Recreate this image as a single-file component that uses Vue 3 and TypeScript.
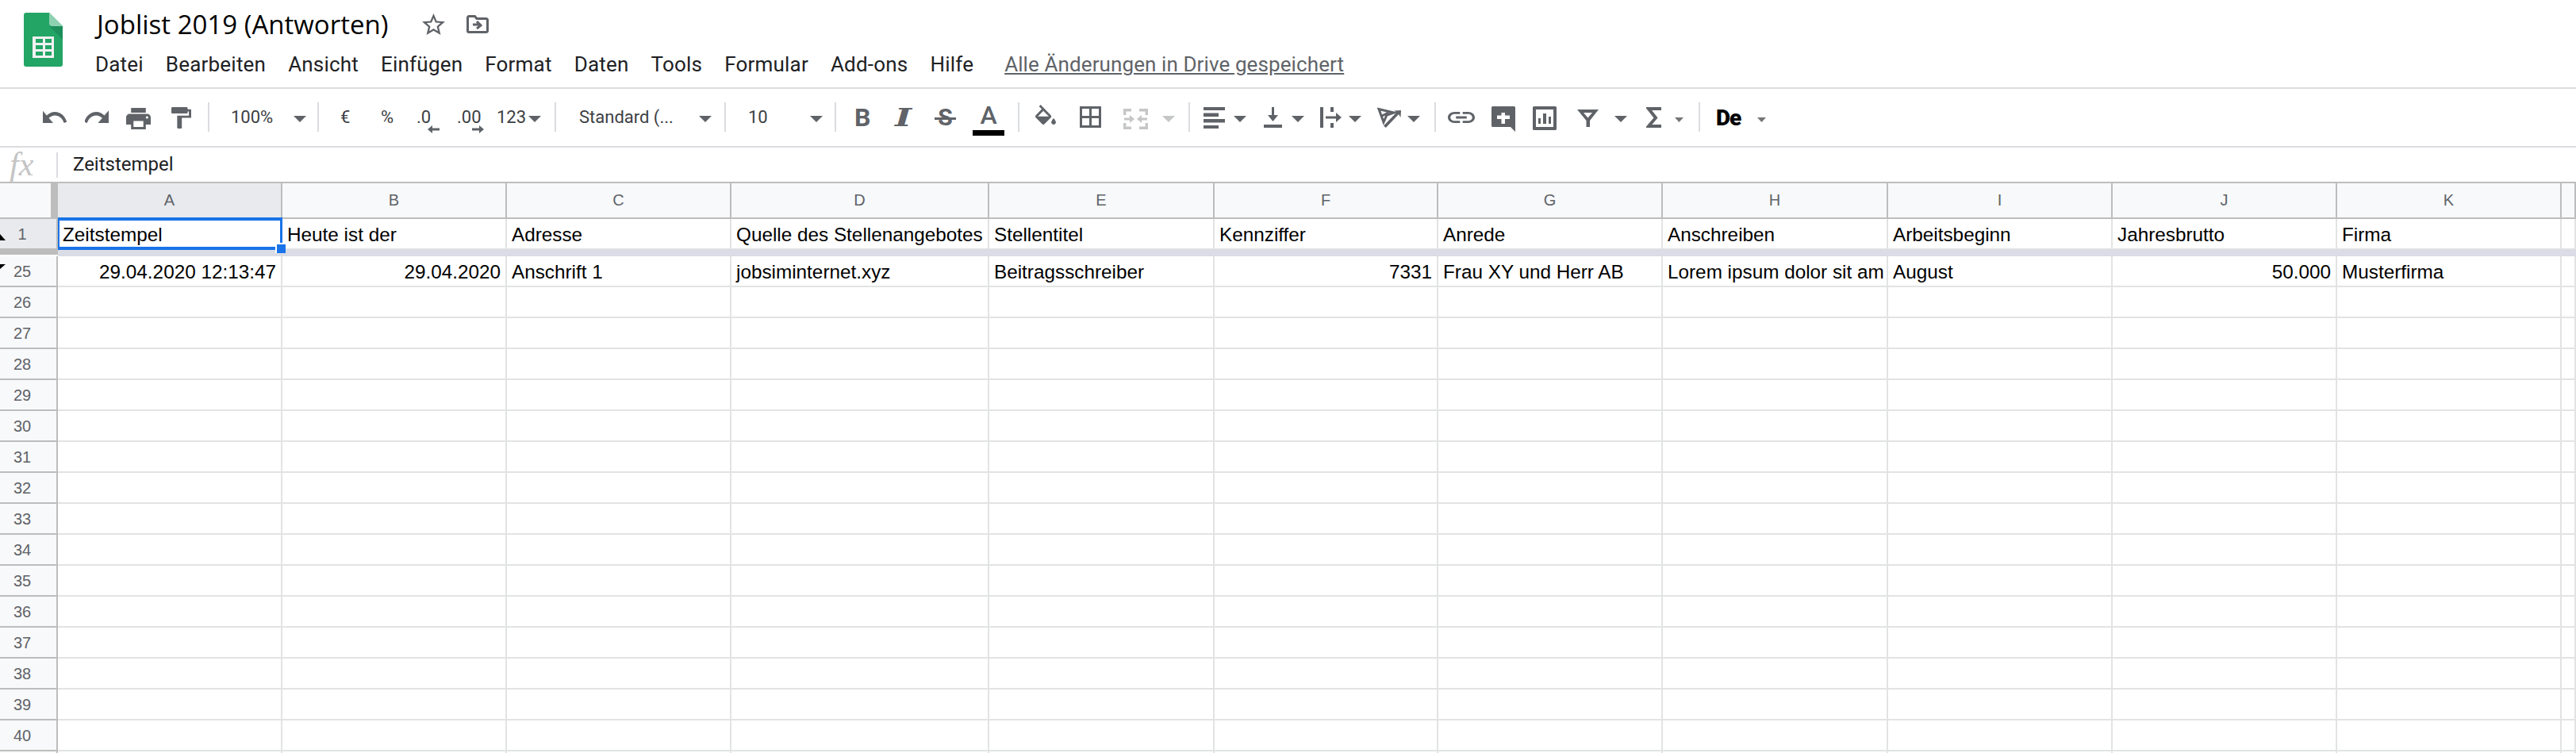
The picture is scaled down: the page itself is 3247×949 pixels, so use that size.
<script setup lang="ts">
interface Cell { t: string; r?: boolean }
const menus = ['Datei','Bearbeiten','Ansicht','Einfügen','Format','Daten','Tools','Formular','Add-ons','Hilfe']
const cols = ['A','B','C','D','E','F','G','H','I','J','K','']
const row1: Cell[] = ['Zeitstempel','Heute ist der','Adresse','Quelle des Stellenangebotes','Stellentitel','Kennziffer','Anrede','Anschreiben','Arbeitsbeginn','Jahresbrutto','Firma',''].map(t => ({ t }))
const row25: Cell[] = [
  { t: '29.04.2020 12:13:47', r: true }, { t: '29.04.2020', r: true }, { t: 'Anschrift 1' }, { t: 'jobsiminternet.xyz' },
  { t: 'Beitragsschreiber' }, { t: '7331', r: true }, { t: 'Frau XY und Herr AB' }, { t: 'Lorem ipsum dolor sit am' },
  { t: 'August' }, { t: '50.000', r: true }, { t: 'Musterfirma' }, { t: '' }
]
const emptyRows = Array.from({ length: 15 }, (_, i) => 26 + i)
</script>

<template>
  <div class="page">
    <header class="top">
      <svg class="logo" width="49" height="68" viewBox="0 0 49 68">
        <path d="M3 0H32L49 17V65a3 3 0 0 1-3 3H3a3 3 0 0 1-3-3V3a3 3 0 0 1 3-3z" fill="#23a566"/>
        <path d="M32 17L49 34V17z" fill="#1c8f5a"/>
        <path d="M32 0L49 17H36a4 4 0 0 1-4-4z" fill="#8ed1b1"/>
        <path d="M11 30H38V57H11z" fill="#f1f1f1"/>
        <path d="M15 33H24V38H15zM27 33H35V38H27zM15 41H24V46H15zM27 41H35V46H27zM15 49H24V54H15zM27 49H35V54H27z" fill="#23a566"/>
      </svg>
      <div class="titles">
        <div class="title-row">
          <span class="doc-title">Joblist 2019 (Antworten)</span>
          <svg class="star" width="29" height="27" viewBox="2 2 20 19" preserveAspectRatio="none"><path fill="#5f6368" d="M22 9.24l-7.19-.62L12 2 9.19 8.63 2 9.24l5.46 4.73L5.82 21 12 17.27 18.18 21l-1.63-7.03L22 9.24zM12 15.4l-3.76 2.27 1-4.28-3.32-2.88 4.38-.38L12 6.1l1.71 4.04 4.38.38-3.32 2.88 1 4.28L12 15.4z"/></svg>
          <svg class="move" width="28" height="23" viewBox="0 0 28 23"><path d="M1.5 4V20a1.5 1.5 0 0 0 1.5 1.5H25a1.5 1.5 0 0 0 1.5-1.5V6A1.5 1.5 0 0 0 25 4.5H13L10.5 1.5H3A1.5 1.5 0 0 0 1.5 3z" fill="none" stroke="#5f6368" stroke-width="3"/><path d="M8 12H16M13 8L18 13L13 17" fill="none" stroke="#5f6368" stroke-width="3"/></svg>
        </div>
        <nav class="menu">
          <span v-for="m in menus" :key="m">{{ m }}</span>
          <span class="saved">Alle Änderungen in Drive gespeichert</span>
        </nav>
      </div>
    </header>

    <div class="toolbar">
      <svg class="i-undo" width="30" height="40"><path transform="translate(-3.5,-1) scale(1.5,1.75)" d="M12.5 8c-2.65 0-5.05.99-6.9 2.6L2 7v9h9l-3.62-3.62c1.39-1.16 3.16-1.88 5.12-1.88 3.54 0 6.55 2.31 7.6 5.5l2.37-.78C21.08 11.03 17.15 8 12.5 8z"/></svg>
      <svg class="i-redo" width="30" height="40"><path transform="translate(-3,-1) scale(1.5,1.75)" d="M18.4 10.6C16.55 8.99 14.15 8 11.5 8c-4.65 0-8.58 3.03-9.96 7.22L3.9 16c1.05-3.19 4.05-5.5 7.6-5.5 1.95 0 3.73.72 5.12 1.88L13 16h9V7l-3.6 3.6z"/></svg>
      <svg class="i-print" width="31" height="40"><path transform="translate(-3.1,3.5) scale(1.55,1.5)" d="M19 8H5c-1.66 0-3 1.34-3 3v6h4v4h12v-4h4v-6c0-1.66-1.34-3-3-3zm-3 11H8v-5h8v5zm3-7c-.55 0-1-.45-1-1s.45-1 1-1 1 .45 1 1-.45 1-1 1zm-1-9H6v4h12V3z"/></svg>
      <svg class="i-paint" width="25" height="40"><path transform="translate(-5.9,4.3) scale(1.47,1.35)" d="M18 4V3c0-.55-.45-1-1-1H5c-.55 0-1 .45-1 1v4c0 .55.45 1 1 1h12c.55 0 1-.45 1-1V6h1v4H9v11c0 .55.45 1 1 1h2c.55 0 1-.45 1-1v-9h8V4h-3z"/></svg>
      <i class="sep s1"></i>
      <span class="tx zoom">100%</span>
      <i class="caret c-zoom"></i>
      <i class="sep s2"></i>
      <span class="tx small euro">€</span>
      <span class="tx small pct">%</span>
      <span class="dec d0"><span class="tx">.0</span>
        <svg width="15" height="10"><path d="M15 3.5H6V0L0 5l6 5V6.5h9z"/></svg>
      </span>
      <span class="dec d00"><span class="tx">.00</span>
        <svg width="15" height="10"><path d="M0 3.5H9V0l6 5-6 5V6.5H0z"/></svg>
      </span>
      <span class="tx n123">123</span>
      <i class="caret c-123"></i>
      <i class="sep s3"></i>
      <span class="tx font">Standard (...</span>
      <i class="caret c-font"></i>
      <i class="sep s4"></i>
      <span class="tx size">10</span>
      <i class="caret c-size"></i>
      <i class="sep s5"></i>
      <span class="glyph g-b">B</span>
      <span class="glyph g-i">I</span>
      <span class="glyph g-s">S</span>
      <span class="color-a"><span class="glyph g-a">A</span><i></i></span>
      <i class="sep s6"></i>
      <svg class="i-fill" width="26" height="40"><path transform="translate(-4.3,4) scale(1.44,1.47)" d="M16.56 8.94L7.62 0 6.21 1.41l2.38 2.38-5.15 5.15c-.59.59-.59 1.54 0 2.12l5.5 5.5c.29.29.68.44 1.06.44s.77-.15 1.06-.44l5.5-5.5c.59-.58.59-1.53 0-2.12zM5.21 10L10 5.21 14.79 10H5.21zM19 11.5s-2 2.17-2 3.5c0 1.1.9 2 2 2s2-.9 2-2c0-1.33-2-3.5-2-3.5z"/></svg>
      <svg class="i-border" width="27" height="40"><path transform="translate(-4.5,1.5) scale(1.5)" d="M3 3v18h18V3H3zm8 16H5v-6h6v6zm0-8H5V5h6v6zm8 8h-6v-6h6v6zm0-8h-6V5h6v6z"/></svg>
      <svg class="i-merge" width="31" height="40"><path fill="none" stroke="#c4c7c5" stroke-width="3.4" d="M1.7 17V10.7H10M20 10.7H29.3V17M1.7 27V33.300H10M20 33.300H29.300V27"/><path fill="#c4c7c5" d="M1 20.500H8V17L14 22L8 27V23.500H1zM30 20.500H23V17L17 22L23 27V23.500H30z"/></svg>
      <i class="caret light c-merge"></i>
      <i class="sep s7"></i>
      <svg class="i-align" width="27" height="40"><path d="M0 7H27V11H0zM0 14.500H19V19H0zM0 22H27V26.500H0zM0 30H19V34H0z"/></svg>
      <i class="caret c-align"></i>
      <svg class="i-valign" width="23" height="40"><path d="M10 7H13V17H18L11.500 25L5 17H10zM0 29H23V33H0z"/></svg>
      <i class="caret c-valign"></i>
      <svg class="i-wrap" width="27" height="40"><path d="M0 7H4V33H0zM13 7H17V13H13zM13 27H17V33H13zM7 18.500H20V14L27 20L20 26V21.500H7z"/></svg>
      <i class="caret c-wrap"></i>
      <svg class="i-rotate" width="30" height="40"><path fill="none" stroke="#5f6368" stroke-width="3" d="M2 9.500L8 26L12 17L21 14zM6 18L14 14"/><path d="M8 30.500L24.500 13.500L21 11.500L30 11L29.500 20L27 16L10.800 33z"/></svg>
      <i class="caret c-rotate"></i>
      <i class="sep s8"></i>
      <svg class="i-link" width="34" height="40"><path transform="translate(-3.400,3.200) scale(1.7,1.4)" d="M3.900 12c0-1.710 1.390-3.100 3.100-3.100h4V7H7c-2.760 0-5 2.240-5 5s2.240 5 5 5h4v-1.900H7c-1.710 0-3.100-1.390-3.100-3.100zM8 13h8v-2H8v2zm9-6h-4v1.900h4c1.710 0 3.100 1.390 3.100 3.100s-1.390 3.100-3.100 3.100h-4V17h4c2.760 0 5-2.240 5-5s-2.240-5-5-5z"/></svg>
      <svg class="i-comment" width="30" height="40"><path fill-rule="evenodd" d="M1.500 6H28.500A1.500 1.500 0 0 1 30 7.500V38L24 32H1.500A1.500 1.500 0 0 1 0 30.500V7.500A1.500 1.500 0 0 1 1.500 6zM12.500 14V17.500H7V22H12.500V28H17V22H23V17.500H17V14z"/></svg>
      <svg class="i-chart" width="30" height="40"><path fill-rule="evenodd" d="M1.500 6H28.500A1.500 1.500 0 0 1 30 7.500V34.500A1.500 1.500 0 0 1 28.500 36H1.500A1.500 1.500 0 0 1 0 34.500V7.500A1.500 1.500 0 0 1 1.500 6zM4 10V32H26V10zM7 21H10V28H7zM13 15H17V28H13zM20 19H23V28H20z"/></svg>
      <svg class="i-filter" width="27" height="40"><path fill-rule="evenodd" d="M0 10H27L16 24V32H11.500V24zM8 14L13.500 20.500L19 14z"/></svg>
      <i class="caret c-filter"></i>
      <svg class="i-sigma" width="19" height="40"><path fill="none" stroke="#5f6368" stroke-width="4" d="M19 9H3L12 20.500L3 31H19"/></svg>
      <i class="caret mini c-sigma"></i>
      <i class="sep s9"></i>
      <span class="de">De</span>
      <i class="caret mini c-de"></i>
    </div>

    <div class="formula">
      <span class="fx">fx</span>
      <i class="fsep"></i>
      <span class="ftext">Zeitstempel</span>
    </div>

    <section class="sheet">
      <div class="grid-row head">
        <div class="corner"></div>
        <div v-for="(c, i) in cols" :key="i" class="col-h" :class="{ active: c === 'A' }">{{ c }}</div>
      </div>

      <div class="grid-row row-first">
        <div class="row-h active"><b class="tri up"></b>1</div>
        <div v-for="(c, i) in row1" :key="i" class="cell">{{ c.t }}</div>
      </div>

      <div class="freeze"><div class="freeze-left"></div><div class="freeze-right"></div></div>

      <div class="grid-row body">
        <div class="row-h"><b class="tri down"></b>25</div>
        <div v-for="(c, i) in row25" :key="i" class="cell" :class="{ right: c.r }">{{ c.t }}</div>
      </div>

      <div v-for="n in emptyRows" :key="n" class="grid-row body">
        <div class="row-h">{{ n }}</div>
        <div v-for="(c, i) in cols" :key="i" class="cell"></div>
      </div>

      <div class="grid-row body">
        <div class="row-h"></div>
        <div v-for="(c, i) in cols" :key="i" class="cell"></div>
      </div>

      <div class="selection"><i class="handle"></i></div>
    </section>
  </div>
</template>

<style>
html, body { margin: 0; background: #fff; overflow: hidden; }
</style>

<style scoped>
.page { width: 3247px; height: 949px; overflow: hidden; background: #fff; font-family: Roboto, sans-serif; color: #202124; }

.top { height: 110px; border-bottom: 2px solid #dadce0; display: flex; }
.logo { margin: 16px 0 0 30px; flex: none; }
.titles { margin-left: 42px; }
.title-row { height: 58px; display: flex; align-items: flex-start; }
.doc-title { font-family: "Open Sans", sans-serif; font-size: 33px; line-height: 30px; margin: 16px 0 0 1px; color: #000; width: 410px; white-space: nowrap; }
.star { margin-top: 17px; }
.move { margin: 19px 0 0 27px; }
.menu { display: flex; gap: 28px; font-size: 26px; letter-spacing: 0.2px; line-height: 30px; margin-top: 8px; white-space: nowrap; margin-left: -1px; }
.saved { color: #5f6368; text-decoration: underline; margin-left: 11px; letter-spacing: 0.1px; }

.toolbar { height: 56px; padding-top: 16px; border-bottom: 2px solid #dadce0; display: flex; align-items: flex-start; padding-left: 54px; }
.toolbar svg { flex: none; fill: #5f6368; }
.sep { flex: none; width: 2px; height: 37px; margin-top: 1px; background: #dadce0; }
.caret { flex: none; width: 16px; height: 8px; margin-top: 18px; background: #5f6368; clip-path: polygon(0 0, 100% 0, 50% 100%); }
.caret.light { background: #c4c7c5; }
.caret.mini { width: 11px; height: 6px; margin-top: 20px; background: #757575; }
.tx { flex: none; font-size: 22px; line-height: 40px; color: #3c4043; white-space: nowrap; }

.i-redo { margin-left: 23px; }
.i-print { margin-left: 22px; }
.i-paint { margin-left: 26px; }
.s1 { margin-left: 21px; }
.zoom { width: 54px; margin-left: 27px; }
.c-zoom { margin-left: 25px; }
.s2 { margin-left: 14px; }
.small { font-size: 22px; }
.euro { width: 12px; margin-left: 27px; }
.pct { width: 17px; margin-left: 39px; }
.dec { flex: none; width: 30px; height: 40px; position: relative; }
.dec svg { position: absolute; top: 30px; }
.d0 { margin-left: 28px; width: 18px; }
.d0 svg { left: 14px; }
.d00 { margin-left: 33px; }
.d00 svg { left: 19px; }
.n123 { width: 36px; margin-left: 20px; }
.c-123 { margin-left: 4px; }
.s3 { margin-left: 17px; }
.font { width: 121px; margin-left: 29px; }
.c-font { margin-left: 30px; }
.s4 { margin-left: 16px; }
.size { width: 24px; margin-left: 28px; }
.c-size { margin-left: 54px; }
.s5 { margin-left: 15px; }

.glyph { flex: none; line-height: 40px; color: #5f6368; }
.g-b { width: 19px; margin-left: 23px; font-size: 32px; font-weight: 700; }
.g-i { width: 23px; margin-left: 31px; font-family: "DejaVu Serif", serif; font-style: italic; font-weight: 700; font-size: 31px; text-align: center; transform: scaleX(1.45); }
.g-s { width: 27px; margin-left: 28px; font-size: 30px; font-weight: 700; text-align: center; position: relative; }
.g-s::after { content: ""; position: absolute; left: 0; right: 0; top: 20px; height: 3px; background: #5f6368; }
.color-a { flex: none; width: 40px; height: 43px; margin-left: 21px; display: flex; flex-direction: column; align-items: center; }
.g-a { font-size: 32px; font-weight: 500; line-height: 32px; height: 35px; margin-top: 1px; }
.color-a i { display: block; width: 40px; height: 8px; background: #000; }
.s6 { margin-left: 17px; }
.i-fill { margin-left: 20px; }
.i-border { margin-left: 30px; }
.i-merge { margin-left: 28px; }
.c-merge { margin-left: 18px; }
.s7 { margin-left: 17px; }
.i-align { margin-left: 17px; }
.c-align { margin-left: 11px; }
.i-valign { margin-left: 22px; }
.c-valign { margin-left: 12px; }
.i-wrap { margin-left: 20px; }
.c-wrap { margin-left: 9px; }
.i-rotate { margin-left: 20px; }
.c-rotate { margin-left: 8px; }
.s8 { margin-left: 18px; }
.i-link { margin-left: 15px; }
.i-comment { margin-left: 21px; }
.i-chart { margin-left: 22px; }
.i-filter { margin-left: 26px; }
.c-filter { margin-left: 20px; }
.i-sigma { margin-left: 24px; }
.c-sigma { margin-left: 17px; }
.s9 { margin-left: 19px; }
.de { flex: none; width: 32px; margin-left: 20px; font-size: 28px; font-weight: 900; line-height: 42px; color: #000; letter-spacing: -1px; }
.c-de { margin-left: 20px; }

.formula { height: 43px; border-bottom: 2px solid #bdbdbd; display: flex; align-items: center; }
.fx { width: 71px; padding-left: 12px; box-sizing: border-box; font-family: "Liberation Serif", serif; font-style: italic; font-size: 42px; color: #c4c4c4; line-height: 43px; }
.fsep { width: 2px; height: 32px; background: #dadce0; }
.ftext { margin-left: 19px; padding-bottom: 2px; font-size: 24px; color: #202124; }

.sheet { position: relative; }
.grid-row { display: grid; grid-template-columns: 73px 283px 283px 283px 325px 284px 282px 283px 284px 283px 283px 283px 18px; }
.head { height: 45px; }
.corner { background: #f8f9fa; border-right: 9px solid #bdbdbd; border-bottom: 2px solid #bdbdbd; box-sizing: border-box; }
.col-h { box-sizing: border-box; background: #f8f9fa; color: #5f6368; font-family: "Liberation Sans", sans-serif; font-size: 20px; line-height: 43px; text-align: center; border-right: 2px solid #bdbdbd; border-bottom: 2px solid #bdbdbd; }
.col-h.active { background: #e8eaed; }
.row-first { height: 37px; }
.body { height: 39px; }
.row-h { box-sizing: border-box; position: relative; background: #f8f9fa; color: #5f6368; font-family: "Liberation Sans", sans-serif; font-size: 20px; text-align: center; padding: 2px 15px 0 0; line-height: 35px; border-right: 2px solid #bdbdbd; border-bottom: 2px solid #bdbdbd; }
.row-first .row-h { border-bottom: 0; background: #e8eaed; line-height: 36px; padding-top: 1px; }
.tri { position: absolute; left: 0; background: #000; }
.tri.up { top: 19px; width: 7px; height: 8px; clip-path: polygon(0 0, 100% 100%, 0 100%); }
.tri.down { top: 10px; width: 7px; height: 6px; clip-path: polygon(0 0, 100% 0, 0 100%); }
.cell { box-sizing: border-box; font-family: "Liberation Sans", sans-serif; font-size: 24.3px; line-height: 34px; padding: 3px 0 0 6px; color: #000; overflow: hidden; white-space: nowrap; border-right: 2px solid #e2e3e3; border-bottom: 2px solid #e2e3e3; }
.row-first .cell { border-bottom: 0; }
.cell.right { text-align: right; padding-right: 6px; }
.freeze { display: flex; height: 10px; }
.freeze-left { width: 73px; height: 8px; background: #bdbdbd; }
.freeze-right { flex: 1; background: #dadde6; border-top: 1px solid #e2e3e3; }
.selection { position: absolute; left: 73px; top: 43px; width: 283px; height: 41px; box-sizing: border-box; border: solid #1a73e8; border-width: 4px 3px 4px 2px; }
.handle { position: absolute; right: -7px; bottom: -8px; width: 11px; height: 11px; background: #1a73e8; border: solid #fff; border-width: 2px 0 0 2px; }
</style>
